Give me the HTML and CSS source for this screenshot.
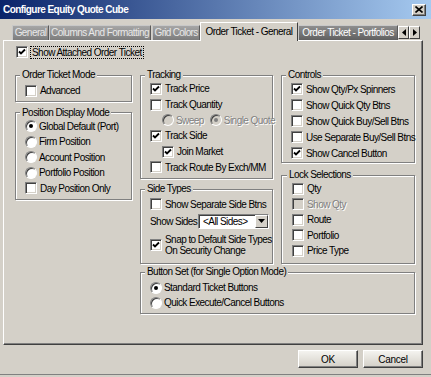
FILE: index.html
```html
<!DOCTYPE html>
<html lang="en">
<head>
    <meta charset="UTF-8">
    <title>Configure Equity Quote Cube</title>
    <link rel="stylesheet" href="styles.css">
</head>
<body>
    <div class="titlebar">
        <div class="title">Configure Equity Quote Cube</div>
        <div class="close-btn">
            <svg width="8" height="7" viewBox="0 0 8 7"><path d="M0.5 0.5 L7.5 6.5 M7.5 0.5 L0.5 6.5" stroke="#000" stroke-width="1.6"/></svg>
        </div>
    </div>

    <div class="tabs">
        <div class="tab tab-general">General</div>
        <div class="tab tab-columns">Columns And Formatting</div>
        <div class="tab tab-colors">Grid Colors</div>
        <div class="tab tab-ticket active">Order Ticket - General</div>
        <div class="tab tab-portfolios hover">Order Ticket - Portfolios</div>
        <div class="tab-scroll">
            <div class="scroll-btn"><svg width="4" height="7" viewBox="0 0 4 7"><path d="M4 0 L0 3.5 L4 7 Z" fill="#000"/></svg></div>
            <div class="scroll-btn"><svg width="4" height="7" viewBox="0 0 4 7"><path d="M0 0 L4 3.5 L0 7 Z" fill="#000"/></svg></div>
        </div>
    </div>

    <div class="panel">
        <label class="row attached"><span class="box checked"></span><span class="focus">Show Attached Order Ticket</span></label>

        <div class="columns">
            <div class="col col-left">
                <fieldset class="group mode">
                    <legend>Order Ticket Mode</legend>
                    <label class="row"><span class="box"></span>Advanced</label>
                </fieldset>
                <fieldset class="group position">
                    <legend>Position Display Mode</legend>
                    <label class="row"><span class="radio on"></span>Global Default (Port)</label>
                    <label class="row"><span class="radio"></span>Firm Position</label>
                    <label class="row"><span class="radio"></span>Account Position</label>
                    <label class="row"><span class="radio"></span>Portfolio Position</label>
                    <label class="row"><span class="box"></span>Day Position Only</label>
                </fieldset>
            </div>

            <div class="col-right">
                <div class="col">
                    <fieldset class="group tracking">
                        <legend>Tracking</legend>
                        <label class="row"><span class="box checked"></span>Track Price</label>
                        <label class="row"><span class="box"></span>Track Quantity</label>
                        <div class="row indent disabled">
                            <span class="radio"></span><span class="opt">Sweep</span>
                            <span class="radio on"></span><span>Single Quote</span>
                        </div>
                        <label class="row"><span class="box checked"></span>Track Side</label>
                        <label class="row indent"><span class="box checked"></span>Join Market</label>
                        <label class="row"><span class="box"></span>Track Route By Exch/MM</label>
                    </fieldset>
                    <fieldset class="group sides">
                        <legend>Side Types</legend>
                        <label class="row"><span class="box"></span>Show Separate Side Btns</label>
                        <div class="row combo-row">
                            <span class="combo-label">Show Sides</span>
                            <div class="combo">
                                <span class="combo-value">&lt;All Sides&gt;</span>
                                <span class="combo-btn"><svg width="7" height="4" viewBox="0 0 7 4"><path d="M0 0 L7 0 L3.5 4 Z" fill="#000"/></svg></span>
                            </div>
                        </div>
                        <label class="row multi"><span class="box checked"></span><span>Snap to Default Side Types<br>On Security Change</span></label>
                    </fieldset>
                </div>

                <div class="col col-third">
                    <fieldset class="group controls">
                        <legend>Controls</legend>
                        <label class="row"><span class="box checked"></span>Show Qty/Px Spinners</label>
                        <label class="row"><span class="box"></span>Show Quick Qty Btns</label>
                        <label class="row"><span class="box"></span>Show Quick Buy/Sell Btns</label>
                        <label class="row"><span class="box"></span>Use Separate Buy/Sell Btns</label>
                        <label class="row"><span class="box checked"></span>Show Cancel Button</label>
                    </fieldset>
                    <fieldset class="group lock">
                        <legend>Lock Selections</legend>
                        <label class="row"><span class="box"></span>Qty</label>
                        <label class="row disabled"><span class="box"></span>Show Qty</label>
                        <label class="row"><span class="box"></span>Route</label>
                        <label class="row"><span class="box"></span>Portfolio</label>
                        <label class="row"><span class="box"></span>Price Type</label>
                    </fieldset>
                </div>

                <fieldset class="group buttonset">
                    <legend>Button Set (for Single Option Mode)</legend>
                    <label class="row"><span class="radio on"></span>Standard Ticket Buttons</label>
                    <label class="row"><span class="radio"></span>Quick Execute/Cancel Buttons</label>
                </fieldset>
            </div>
        </div>
    </div>

    <div class="footer">
        <button class="btn">OK</button>
        <button class="btn">Cancel</button>
    </div>
</body>
</html>
```

FILE: styles.css
```css
body {
    margin: 0;
    width: 431px;
    height: 377px;
    overflow: hidden;
    background-color: #d4d0c8;
    font-family: "Liberation Sans", Arial, sans-serif;
    font-size: 10px;
    letter-spacing: -0.55px;
    color: #000;
}

.titlebar {
    display: flex;
    align-items: center;
    justify-content: space-between;
    height: 19px;
    padding: 0 5px 0 3px;
    background: linear-gradient(to right, #0a246a, #a6caf0);
}

.title {
    color: #fff;
    font-weight: bold;
    font-size: 10px;
    letter-spacing: -0.55px;
}

.close-btn {
    display: flex;
    align-items: center;
    justify-content: center;
    width: 12px;
    height: 10px;
    background-color: #d4d0c8;
    border: 1px solid;
    border-color: #fff #404040 #404040 #fff;
    box-shadow: inset -1px -1px 0 #808080;
}

.tabs {
    display: flex;
    align-items: flex-end;
    height: 21px;
    padding-left: 12px;
}

.tab {
    flex: none;
    box-sizing: border-box;
    height: 15px;
    line-height: 14px;
    text-align: center;
    color: #e8e8e8;
    background: linear-gradient(#a6a6a6, #7c7c7c);
    border-left: 1px solid #c8c8c8;
    border-top: 1px solid #c8c8c8;
    border-right: 1px solid #5a5a5a;
    white-space: nowrap;
}

    .tab.active {
        height: 19px;
        line-height: 17px;
        color: #000;
        background: #d4d0c8;
        border-color: #fff #404040 transparent #fff;
        margin-bottom: -1px;
        position: relative;
        z-index: 1;
    }

    .tab.hover {
        background: linear-gradient(#8e8e8e, #606060);
        color: #fff;
    }

.tab-general { width: 37px; }
.tab-columns { width: 102px; margin-right: 1px; }
.tab-colors { width: 48px; letter-spacing: -0.7px; }
.tab-ticket { width: 98px; }
.tab-portfolios { width: 100px; }

.tab-scroll {
    display: flex;
    align-self: flex-end;
    margin-bottom: 1px;
}

.scroll-btn {
    display: flex;
    align-items: center;
    justify-content: center;
    width: 9px;
    height: 11px;
    background-color: #d4d0c8;
    border: 1px solid;
    border-color: #fff #404040 #404040 #fff;
}

.panel {
    height: 299px;
    margin: 0 8px 0 3px;
    padding: 4px 0 0 11px;
    border: 1px solid;
    border-color: #fff #404040 #404040 #fff;
    box-shadow: inset -1px -1px 0 #808080;
}

.row {
    display: flex;
    align-items: center;
    height: 15.6px;
    white-space: nowrap;
}

.attached {
    height: 14px;
    padding-left: 1px;
}

.focus {
    outline: 1px dotted #000;
    padding: 0 1px;
}

.box {
    flex: none;
    box-sizing: border-box;
    width: 12px;
    height: 12px;
    margin-right: 3px;
    background-color: #fff;
    border: 1px solid;
    border-color: #808080 #fff #fff #808080;
    box-shadow: inset 1px 1px 0 #404040, inset -1px -1px 0 #d4d0c8;
}

    .box.checked {
        background-image: url("data:image/svg+xml;utf8,<svg xmlns='http://www.w3.org/2000/svg' width='10' height='10' viewBox='0 0 10 10'><path d='M2 4.5 L4 6.5 L8 2.5' fill='none' stroke='black' stroke-width='1.8'/></svg>");
        background-repeat: no-repeat;
        background-position: center;
    }

.radio {
    flex: none;
    box-sizing: border-box;
    width: 12px;
    height: 12px;
    margin-right: 2px;
    border-radius: 50%;
    background-color: #fff;
    border: 1px solid;
    border-color: #808080 #fff #fff #808080;
    box-shadow: inset 1px 1px 0 #404040;
    position: relative;
}

    .radio.on::after {
        content: "";
        position: absolute;
        left: 3px;
        top: 3px;
        width: 4px;
        height: 4px;
        border-radius: 50%;
        background-color: #000;
    }

.disabled {
    color: #808080;
    text-shadow: 1px 1px 0 #fff;
}

    .disabled .box,
    .disabled .radio {
        background-color: #d4d0c8;
    }

    .disabled .radio.on::after {
        background-color: #808080;
    }

.indent {
    padding-left: 12px;
}

.opt {
    margin-right: 6px;
}

.columns {
    display: flex;
    gap: 8px;
    margin-top: 10px;
}

.col {
    display: flex;
    flex-direction: column;
    gap: 4px;
}

.col-left {
    width: 117px;
    gap: 5px;
}

.col-third {
    gap: 6px;
}

.col-right {
    display: grid;
    grid-template-columns: 133px 134px;
    align-items: start;
    column-gap: 8px;
    row-gap: 2px;
}

.group {
    margin: 0;
    padding: 0 0 0 9px;
    min-width: 0;
    border: 1px solid #808080;
    box-shadow: 1px 1px 0 #fff, inset 1px 1px 0 #fff;
}

    .group legend {
        margin-left: -5px;
        padding: 0 2px;
        line-height: 12px;
        white-space: nowrap;
        background-color: #d4d0c8;
    }

.mode {
    padding-top: 2px;
    padding-bottom: 2px;
}

.position {
    padding-bottom: 3px;
}

.position .row {
    height: 15.5px;
}

.tracking {
    padding-bottom: 3px;
}

.tracking .row {
    height: 15.7px;
}

.controls .row {
    height: 16px;
}

.controls {
    padding-bottom: 1px;
}

.lock {
    padding-left: 10px;
    padding-bottom: 4px;
}

.lock .row {
    height: 15.5px;
}

.sides {
    padding-top: 1px;
    padding-bottom: 7px;
}

.sides .row {
    height: 16px;
}

    .sides .combo-row {
        height: 18px;
    }

.combo-label {
    width: 48px;
}

.combo {
    display: flex;
    box-sizing: border-box;
    width: 71px;
    height: 15px;
    background-color: #fff;
    border: 1px solid;
    border-color: #808080 #fff #fff #808080;
    box-shadow: inset 1px 1px 0 #404040;
}

.combo-value {
    flex: 1;
    padding: 1px 0 0 4px;
    line-height: 12px;
}

.combo-btn {
    display: flex;
    align-items: center;
    justify-content: center;
    box-sizing: border-box;
    width: 13px;
    height: 13px;
    background-color: #d4d0c8;
    border: 1px solid;
    border-color: #fff #404040 #404040 #fff;
}

    .sides .multi {
        height: 22px;
        margin-top: 4px;
        line-height: 11px;
    }

.buttonset {
    grid-column: 1 / 3;
    padding-top: 2px;
    padding-bottom: 3px;
}

.buttonset .row {
    height: 15px;
}

.footer {
    display: flex;
    justify-content: flex-end;
    gap: 5px;
    padding: 5px 8px 0 0;
    height: 24px;
    border-bottom: 1px solid #808080;
}

.btn {
    box-sizing: border-box;
    width: 60px;
    height: 18px;
    padding: 0;
    font-family: inherit;
    font-size: 10px;
    letter-spacing: -0.3px;
    color: #000;
    background: linear-gradient(#f4f3ef, #d4d0c8);
    border: 1px solid;
    border-color: #fff #404040 #404040 #fff;
    box-shadow: inset -1px -1px 0 #808080;
}
```
